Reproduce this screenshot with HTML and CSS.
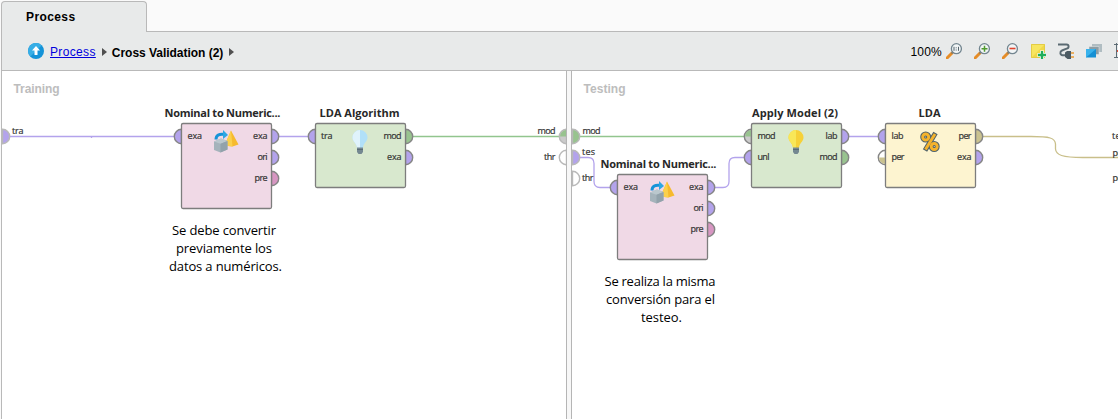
FILE: index.html
```
<!DOCTYPE html>
<html lang="es">
<head>
<meta charset="utf-8">
<title>Process</title>
<link rel="stylesheet" href="styles.css">
</head>
<body>
<div class="tabs"><div class="tab">Process</div><div class="tab-rest"></div></div>
<div class="toolbar">
  <nav class="crumbs">
    <svg class="up" width="16" height="16" viewBox="0 0 16 16"><circle cx="8" cy="8" r="8" fill="#1493d8"/><path d="M8 0a8 8 0 0 0-5.6 13.6L13.6 2.4A8 8 0 0 0 8 0z" fill="#37aee6"/><path d="M8 3l4 4.5H9.5V12h-3V7.500H4z" fill="#fff"/></svg>
    <a class="link" href="#">Process</a>
    <svg class="arrow" width="5" height="8" viewBox="0 0 5 8"><path d="M0 0l5 4-5 4z" fill="#505050"/></svg>
    <span class="current">Cross Validation (2)</span>
    <svg class="arrow" width="5" height="8" viewBox="0 0 5 8"><path d="M0 0l5 4-5 4z" fill="#505050"/></svg>
  </nav>
  <div class="tools">
    <span class="zoom">100%</span>
    <svg width="16" height="16" viewBox="0 0 16 16"><use href="#lens"/><path d="M8 3.800v4M12.500 3.800v4" stroke="#53636c"/><path d="M10.200 4.300v1M10.200 6.500v1" stroke="#53636c"/></svg>
    <svg width="16" height="16" viewBox="0 0 16 16"><use href="#lens"/><path d="M7.500 5.700h6M10.500 2.700v6" stroke="#4f9a2e" stroke-width="1.500"/></svg>
    <svg width="16" height="16" viewBox="0 0 16 16"><use href="#lens"/><path d="M7.500 5.500h6" stroke="#e0432c" stroke-width="1.600"/></svg>
    <svg width="16" height="16" viewBox="0 0 16 16"><path d="M1 1h14v14H1z" fill="#f0d848"/><path d="M1 1h14L1 15z" fill="#f7e660"/><path d="M1.500 1.500h13v13h-13z" fill="none" stroke="#e3cc45"/><path d="M12 7.500v9M7.500 12h9" stroke="#fff" stroke-width="4"/><path d="M12 8v8M8 12h8" stroke="#1fae5b" stroke-width="2.400"/></svg>
    <svg width="16" height="16" viewBox="0 0 16 16"><path d="M0 1.500h8.500a2 2 0 0 1 0 4.200L4 7.500C1.500 8.500 2 12.200 4.500 12.200H8" fill="none" stroke="#5a6a72" stroke-width="1.900"/><path d="M7 9.500l2-1.500h4v8H9.500L7 14z" fill="#4c5b63"/><path d="M13 10h3.500M13 14h3.500" stroke="#e79a35" stroke-width="1.500"/></svg>
    <svg width="16" height="16" viewBox="0 0 16 16"><path d="M6 1h10v8H6z" fill="#b0bdc2"/><path d="M3 3.500h10v8H3z" fill="#8c9da5" stroke="#e8eaea" stroke-width=".5"/><path d="M0 6h10v8.500H0z" fill="#1590d4"/><path d="M0 6h10L0 14.500z" fill="#38b2ec"/></svg>
    <svg width="16" height="16" viewBox="0 0 16 16"><path d="M2.500 0v15M0 1.500h16M0 14.500h16" stroke="#5d6c75"/><path d="M3 8h6" stroke="#df513b" stroke-width="2"/></svg>
  </div>
</div>

<svg class="defs" width="0" height="0">
  <defs>
    <g id="lens"><path d="M1 15l5-5" stroke="#e58d28" stroke-width="3" stroke-linecap="round"/><path d="M5.500 10.500l1.500-1.500" stroke="#68777f" stroke-width="1.500"/><circle cx="10.400" cy="5.700" r="5" fill="#f1f5f6" stroke="#738690" stroke-width="1.300"/></g>
    <path id="in" d="M0-7.200a7.200 7.200 0 0 0 0 14.400z"/>
    <path id="out" d="M0-7.200a7.200 7.200 0 0 1 0 14.400z"/>
    <g id="convert">
      <path d="M17.500.5L11 15.500l8 1 6-2z" fill="#f6ba2e"/><path d="M17.500.5l-6.500 15 8 1z" fill="#fbd04c"/>
      <path d="M2.500 9.500C2.500 5 6 3.800 10 4.300" fill="none" stroke="#1694d8" stroke-width="3"/><path d="M9.500 0l5 5-5 4z" fill="#2da7e4"/>
      <path d="M.5 11.500L7.500 8.500l6.500 2.500v8.500L7 22.500.5 20z" fill="#a5b3bb"/><path d="M.5 11.500L7.500 8.500l6.500 2.500-7 2.800z" fill="#bac7cd"/><path d="M7 13.800l7-2.800v8.500l-7 3z" fill="#92a2ab"/>
    </g>
    <g id="bulb-base"><path d="M4.500 17.500h6v4.500l-1.500 2H6l-1.500-2z" fill="#748891"/><path d="M4.500 19.500h6" stroke="#5a6c75"/></g>
  </defs>
</svg>

<main class="panels">
  <section class="panel training">
    <svg class="canvas" width="564" height="348" viewBox="2 71 564 348">
      <text class="heading" x="13.500" y="93" textLength="46">Training</text>
      <g class="wire exa"><path d="M10 136.500h164M279 136.500h29M91.500 137v1"/></g>
      <g class="wire mod"><path d="M413 136.500h146"/></g>
      <g class="edge-port">
        <use href="#out" x="2.500" y="136.500" class="exa"/>
        <use href="#in" x="566.500" y="136.500" class="half"/><path class="mod plain" d="M566.500 136.500h-6.500a6.500 6.500 0 0 1 6.500-6.500z"/>
        <use href="#in" x="566.500" y="157.500" class="empty"/>
      </g>
      <g class="label"><text x="12" y="134" textLength="11.500">tra</text><text class="end" x="555.500" y="134" textLength="18">mod</text><text class="end" x="555.500" y="160" textLength="11.500">thr</text></g>

      <g class="node">
        <g class="port"><use href="#in" x="181.500" y="136.500" class="exa"/><use href="#out" x="271.500" y="136.500" class="exa"/><use href="#out" x="271.500" y="157.500" class="exa"/><use href="#out" x="271.500" y="178.500" class="pre"/></g>
        <rect class="pink" x="181.500" y="123.500" width="90" height="85" rx="1.500"/>
        <text class="title" x="222.500" y="117" textLength="116">Nominal to Numeric...</text>
        <use href="#convert" x="213.500" y="130"/>
        <g class="label"><text x="187.500" y="139" textLength="14.500">exa</text><text class="end" x="267.500" y="139" textLength="14.500">exa</text><text class="end" x="267.500" y="160" textLength="10">ori</text><text class="end" x="267.500" y="181" textLength="13">pre</text></g>
      </g>
      <g class="node">
        <g class="port"><use href="#in" x="315.500" y="136.500" class="exa"/><use href="#out" x="405.500" y="136.500" class="mod"/><use href="#out" x="405.500" y="157.500" class="exa"/></g>
        <rect class="green" x="315.500" y="123.500" width="90" height="64" rx="1.500"/>
        <text class="title" x="359.500" y="117" textLength="80">LDA Algorithm</text>
        <g transform="translate(352.500 130)"><path d="M7.500 0a7.500 7.500 0 0 0-7.500 7.500c0 4 4.500 6 4.500 10.500h6c0-4.500 4.500-6.500 4.500-10.500A7.500 7.500 0 0 0 7.500 0z" fill="#b1e0f8"/><path d="M7.500 0a7.500 7.500 0 0 0-7.500 7.500c0 4 4.500 6 4.500 10.500h3z" fill="#e0f3fc"/><use href="#bulb-base"/></g>
        <g class="label"><text x="321" y="139" textLength="11.500">tra</text><text class="end" x="401.500" y="139" textLength="18">mod</text><text class="end" x="401.500" y="160" textLength="14.500">exa</text></g>
      </g>
      <g class="note"><text x="224" y="235" textLength="104">Se debe convertir</text><text x="224" y="253" textLength="96">previamente los</text><text x="225.500" y="271" textLength="113">datos a numéricos.</text></g>
    </svg>
  </section>
  <div class="splitter"></div>
  <section class="panel testing">
    <svg class="canvas" width="546" height="348" viewBox="572 71 546 348">
      <text class="heading" x="583.500" y="93" textLength="42">Testing</text>
      <g class="wire mod"><path d="M580 136.500h165"/></g>
      <g class="wire exa"><path d="M580 157.500h8q6 0 6 6v18q0 6 6 6h10M714 187.500h9q6 0 6-6v-18q0-6 6-6h10M849 136.500h30"/></g>
      <g class="wire per"><path d="M983 136.500h48C1050 136.500 1055 138 1055.500 144v5C1056 155 1062 157.500 1083 157.500H1118"/></g>
      <g class="edge-port"><use href="#out" x="572.500" y="136.500" class="mod"/><use href="#out" x="572.500" y="157.500" class="exa"/><use href="#out" x="572.500" y="178.500" class="empty"/></g>
      <g class="label"><text x="582.500" y="134" textLength="18">mod</text><text x="582" y="155" textLength="13">tes</text><text x="582" y="181" textLength="11.500">thr</text><text x="1112" y="139" textLength="13">tes</text><text x="1112.500" y="155.500" textLength="13">per</text><text x="1112.500" y="181" textLength="13">per</text></g>

      <g class="node">
        <g class="port"><use href="#in" x="617.500" y="187.500" class="exa"/><use href="#out" x="707.500" y="187.500" class="exa"/><use href="#out" x="707.500" y="208.500" class="exa"/><use href="#out" x="707.500" y="229.500" class="pre"/></g>
        <rect class="pink" x="617.500" y="174.500" width="90" height="85" rx="1.500"/>
        <text class="title" x="658.500" y="168" textLength="116">Nominal to Numeric...</text>
        <use href="#convert" x="649.500" y="181"/>
        <g class="label"><text x="623.500" y="190" textLength="14.500">exa</text><text class="end" x="703.500" y="190" textLength="14.500">exa</text><text class="end" x="703.500" y="211" textLength="10">ori</text><text class="end" x="703.500" y="232" textLength="13">pre</text></g>
      </g>
      <g class="node">
        <g class="port"><use href="#in" x="751.500" y="136.500" class="half"/><path class="mod" d="M751.500 136.500h-6.500a6.500 6.500 0 0 1 6.500-6.500z"/><use href="#in" x="751.500" y="157.500" class="exa"/><use href="#out" x="841.500" y="136.500" class="exa"/><use href="#out" x="841.500" y="157.500" class="mod"/></g>
        <rect class="green" x="751.500" y="123.500" width="90" height="64" rx="1.500"/>
        <text class="title" x="795" y="117" textLength="86">Apply Model (2)</text>
        <g transform="translate(788.500 130)"><path d="M7.500 0a7.500 7.500 0 0 0-7.500 7.500c0 4 4.500 6 4.500 10.500h6c0-4.500 4.500-6.500 4.500-10.500A7.500 7.500 0 0 0 7.500 0z" fill="#f6d138"/><path d="M7.500 0a7.500 7.500 0 0 0-7.500 7.500c0 4 4.500 6 4.500 10.500h3z" fill="#f8e758"/><use href="#bulb-base"/></g>
        <g class="label"><text x="757.500" y="139" textLength="18">mod</text><text x="757.500" y="160" textLength="12">unl</text><text class="end" x="837.500" y="139" textLength="12">lab</text><text class="end" x="837.500" y="160" textLength="18">mod</text></g>
      </g>
      <g class="node">
        <g class="port"><use href="#in" x="885.500" y="136.500" class="exa"/><use href="#in" x="885.500" y="157.500" class="empty"/><path class="per" d="M885.500 157.500h-6.500a6.500 6.500 0 0 0 6.500 6.500z"/><use href="#out" x="975.500" y="136.500" class="per"/><use href="#out" x="975.500" y="157.500" class="exa"/></g>
        <rect class="yellow" x="885.500" y="123.500" width="90" height="64" rx="1.500"/>
        <text class="title" x="929.500" y="117" textLength="22">LDA</text>
        <g fill="none" stroke="#4e626b" stroke-width="5"><circle cx="925.700" cy="137" r="3"/><circle cx="934.200" cy="146.500" r="3"/><path d="M935.500 133l-10.500 17.500"/></g>
        <g fill="none" stroke="#f5b32c" stroke-width="2.900"><circle cx="925.700" cy="137" r="3"/><circle cx="934.200" cy="146.500" r="3"/><path d="M935 134l-9.500 15.500"/></g>
        <g class="label"><text x="891.500" y="139" textLength="12">lab</text><text x="891.500" y="160" textLength="13">per</text><text class="end" x="971.500" y="139" textLength="13">per</text><text class="end" x="971.500" y="160" textLength="14.500">exa</text></g>
      </g>
      <g class="note"><text x="660" y="286" textLength="111">Se realiza la misma</text><text x="660.500" y="304" textLength="109">conversión para el</text><text x="661.500" y="322" textLength="41">testeo.</text></g>
    </svg>
  </section>
</main>
</body>
</html>
```
FILE: styles.css
```
* { box-sizing: border-box; }
body { margin: 0; height: 419px; overflow: hidden; background: #fafafa; font-family: "Liberation Sans", Arial, sans-serif; font-size: 12px; color: #000; display: flex; flex-direction: column; }
svg { flex: none; }
.defs { position: absolute; }

.tabs { display: flex; height: 32px; padding: 1px 0 0 1px; }
.tab { width: 146px; padding: 8px 0 0 24px; background: #e8eaea; border: 1px solid #b9b9b9; border-bottom: 0; border-radius: 4px 4px 0 0; font-weight: bold; line-height: 15px; letter-spacing: .4px; }
.tab-rest { flex: 1; border-bottom: 1px solid #b9b9b9; }

.toolbar { display: flex; justify-content: space-between; height: 39px; flex: none; margin-left: 1px; padding: 0 0 0 26px; background: #e8eaea; border-left: 1px solid #b9b9b9; border-bottom: 1px solid #b9b9b9; }
.crumbs { display: flex; align-items: center; height: 38px; }
.crumbs .arrow { margin-top: 2px; }
.link { margin: 2px 6px 0; color: #00d; letter-spacing: .35px; text-decoration: underline; }
.current { margin: 3px 6px 0 5px; font-weight: bold; letter-spacing: -.03px; }
.tools { display: flex; align-items: center; gap: 12px; height: 38px; margin-right: -12px; }
.zoom { margin: 1px -8px 0 0; letter-spacing: .2px; }

.panels { display: flex; flex: 1; margin-left: 1px; border-left: 1px solid #b9b9b9; }
.panel { background: #fff; overflow: hidden; }
.training { width: 564px; }
.testing { flex: 1; }
.splitter { width: 6px; flex: none; background: #f7f7f7; border: 1px solid #b5b5b5; border-width: 0 1px; }
.canvas { display: block; }

.heading { font: bold 12px "Liberation Sans", Arial, sans-serif; fill: #bdbdbd; }
.title { font: bold 11px "Open Sans", sans-serif; fill: #282828; text-anchor: middle; }
.label { font: 9px "Open Sans", sans-serif; fill: #333; stroke: #333; stroke-width: .2px; }
.end { text-anchor: end; }
.note { font: 13px "Open Sans", sans-serif; fill: #000; text-anchor: middle; }

.wire { fill: none; stroke-width: 1.3; }
.wire.exa { stroke: #b3a3ec; }
.wire.mod { stroke: #92c58e; }
.wire.per { stroke: #c9bf8a; }
.port { stroke: #858585; stroke-width: 1.4; }
.edge-port { stroke: #b9b9b9; stroke-width: 1.4; }
.port .exa, .edge-port .exa { fill: #b3a3ec; }
.port .mod, .edge-port .mod { fill: #98c38f; }
.port path.mod, .port path.per, .plain { stroke: none; }
.port .pre { fill: #d796c2; }
.port .per { fill: #cac28f; }
.half { fill: #cbcbcb; }
.empty { fill: #fff; }
.node rect { stroke: #7d7d7d; stroke-width: 1.3; }
.pink { fill: #f0d9e6; }
.green { fill: #d8e8ce; }
.yellow { fill: #fdf4d0; }
```
